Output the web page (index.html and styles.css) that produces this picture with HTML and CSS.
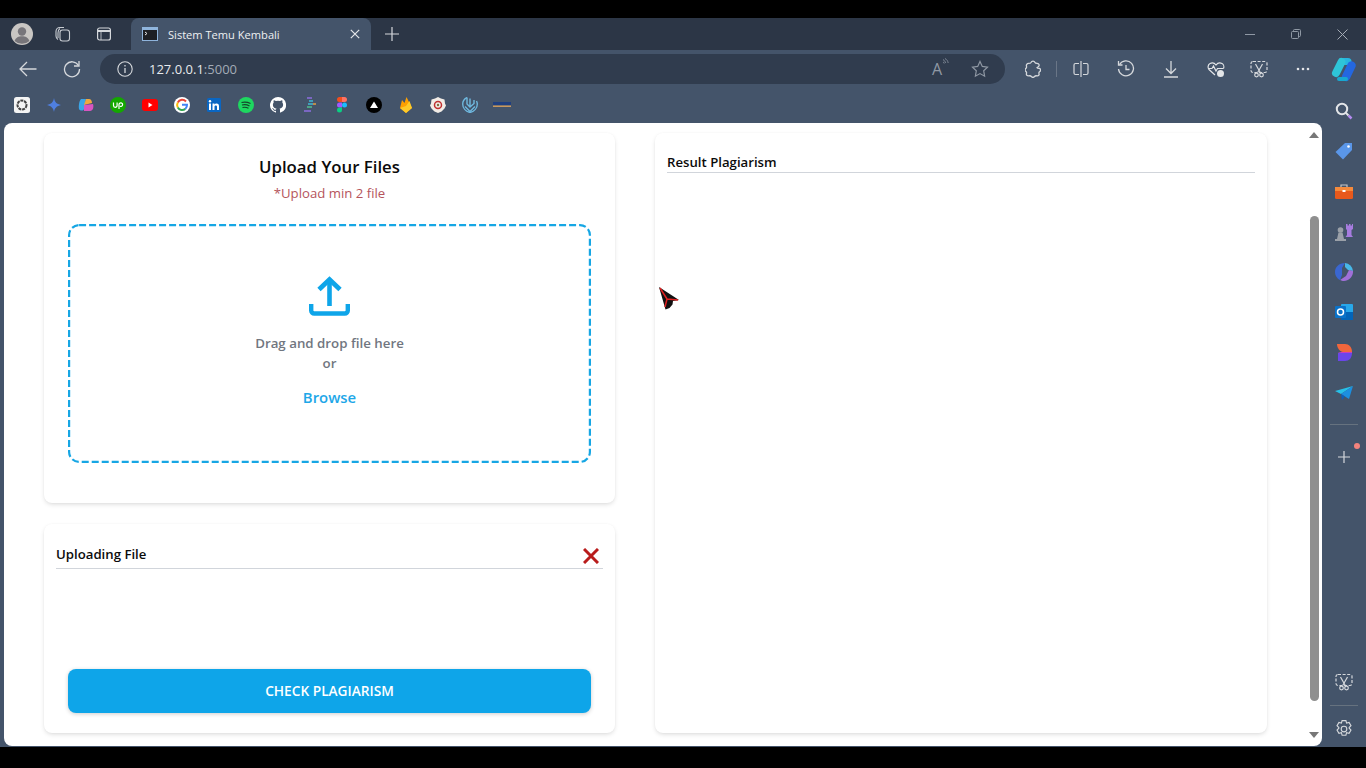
FILE: index.html
```html
<!DOCTYPE html>
<html>

<head>
	<meta charset="UTF-8">
	<title>Sistem Temu Kembali</title>
	<link rel="stylesheet" href="styles.css">
</head>

<body>
	<div class="browser">
		<!-- tab strip -->
		<div class="tabstrip">
			<span class="avatar">
				<svg width="22" height="22" viewBox="0 0 22 22"><circle cx="11" cy="11" r="11" fill="#c9c6c3"/><circle cx="11" cy="8.500" r="4.200" fill="#77757a"/><path d="M3.600 18c1.200-3.600 4-4.800 7.400-4.800s6.200 1.200 7.400 4.800a11 11 0 0 1-14.800 0z" fill="#77757a"/></svg>
			</span>
			<span class="strip-icon strip-icon-first">
				<svg width="18" height="18" viewBox="0 0 18 18" fill="none" stroke="#c8ccd2" stroke-width="1.100"><rect x="7" y="5" width="9.500" height="11" rx="2.500"/><path d="M5 14.500c-1.500-1-2-2-2-3.500V6.500C3 4 4.500 2.500 7 2.500h4"/><path d="M7 3.500C5.500 4.500 5 6 5 8v5"/></svg>
			</span>
			<span class="strip-icon">
				<svg width="16" height="16" viewBox="0 0 16 16" fill="none" stroke="#d5d8dc" stroke-width="1.200"><rect x="1.600" y="2" width="12.800" height="12" rx="2"/><path d="M1.600 5h12.800" stroke-width="2"/><path d="M5 5.200V14" stroke-width=".8"/></svg>
			</span>
			<div class="tab">
				<svg class="tab-favicon" width="16" height="14" viewBox="0 0 16 14"><rect width="16" height="14" fill="#8fb4dc"/><rect x="1" y="3" width="14" height="10" fill="#1d1f24"/><path d="M3 5l2 1.500L3 8" fill="none" stroke="#e5e5e5"/></svg>
				<span class="tab-title">Sistem Temu Kembali</span>
				<svg class="tab-close" width="10" height="10" viewBox="0 0 10 10" stroke="#e6e8eb" stroke-width="1.200"><path d="M.8.800l8.400 8.400M9.200.800L.8 9.200"/></svg>
			</div>
			<svg class="new-tab" width="14" height="14" viewBox="0 0 14 14" stroke="#d5d8dc" stroke-width="1.200"><path d="M7 0v14M0 7h14"/></svg>
			<div class="window-btns">
				<svg width="10" height="10" viewBox="0 0 10 10" stroke="#8f98a4"><path d="M0 5.500h10"/></svg>
				<svg width="10" height="10" viewBox="0 0 10 10" fill="none" stroke="#8f98a4"><rect x=".5" y="2.500" width="7" height="7" rx="1"/><path d="M2.500 2V1.500a1 1 0 0 1 1-1h5a1 1 0 0 1 1 1v5a1 1 0 0 1-1 1H8"/></svg>
				<svg width="11" height="11" viewBox="0 0 11 11" stroke="#a5acb6"><path d="M.5.500l10 10M10.500.500l-10 10"/></svg>
			</div>
		</div>

		<!-- address bar row -->
		<div class="toolbar">
			<svg class="nav-back" width="18" height="16" viewBox="0 0 18 16" fill="none" stroke="#d5d8dc" stroke-width="1.300"><path d="M17.500 8H1M8 1L1 8l7 7"/></svg>
			<svg class="nav-reload" width="18" height="18" viewBox="0 0 18 18" fill="none" stroke="#d5d8dc" stroke-width="1.300"><path d="M15.500 5.500A7.500 7.500 0 1 0 16.500 9"/><path d="M16 1v5h-5"/></svg>
			<div class="address">
				<svg class="info-icon" width="16" height="16" viewBox="0 0 16 16" fill="none" stroke="#d5d8dc" stroke-width="1.100"><circle cx="8" cy="8" r="7.200"/><path d="M8 7v5M8 4v1.500" stroke-width="1.300"/></svg>
				<span class="url">127.0.0.1<span class="url-port">:5000</span></span>
				<div class="address-end">
					<span class="read-aloud">A<svg width="7" height="9" viewBox="0 0 7 9" fill="none" stroke="#8f98a4" stroke-width=".8"><path d="M1 1.500c1.500 1 2.300 2 2.500 3.500M1 4c.7.300 1 .7 1.200 1.500M3 .5c1.800 1 2.800 2.500 3.200 4.500"/></svg></span>
					<svg width="18" height="18" viewBox="0 0 18 18" fill="none" stroke="#8f98a4" stroke-width="1.200"><path d="M9 1.500l2.300 4.900 5.200.7-3.800 3.700.9 5.400L9 13.600l-4.600 2.600.9-5.400L1.500 7.100l5.200-.7z"/></svg>
				</div>
			</div>
			<div class="tool-icons">
				<svg class="tool-ext" width="16" height="18" viewBox="0 0 16 18" fill="none" stroke="#d5d8dc" stroke-width="1.300"><path d="M6 2.500a2.200 2.200 0 0 1 4 0c.3.800 1 .9 2 .9 1.500 0 2.500 1 2 2.500-.3 1-1.500 1-2 1.800.5.800 1.700.6 2.800.8a1.800 1.800 0 0 1 0 3c-.8.500-1.100 1-.8 2 .5 1.500-.5 2.500-2 2.300-1.300-.2-2 0-2.800 1-.7.800-1.800.800-2.500 0-.8-1-1.500-1.200-2.800-1C2 15.900 1 15 1.500 13.400c.3-1 0-1.500-.6-2a1.800 1.800 0 0 1 0-3c.6-.500.900-1 .6-2C1 5 2 3.400 3.500 3.400c1 0 2 0 2.500-.9z"/></svg>
				<span class="tool-sep"></span>
				<svg class="tool-split" width="16" height="16" viewBox="0 0 16 16" fill="none" stroke="#d5d8dc" stroke-width="1.200"><path d="M6 2.500H2.500a1.500 1.500 0 0 0-1.500 1.500v8a1.500 1.500 0 0 0 1.500 1.500H6M10 2.500h3.500A1.500 1.500 0 0 1 15 4v8a1.500 1.500 0 0 1-1.500 1.500H10M8 0v16"/></svg>
				<svg class="tool-history" width="18" height="18" viewBox="0 0 18 18" fill="none" stroke="#d5d8dc" stroke-width="1.300"><path d="M2.500 4.500A7.500 7.500 0 1 1 1.500 9"/><path d="M1.500 1v4h4M9 5v4.500h3.500"/></svg>
				<svg class="tool-download" width="14" height="17" viewBox="0 0 14 17" fill="none" stroke="#d5d8dc" stroke-width="1.300"><path d="M7 0v12M2 7.500L7 12.500l5-5M0 16h14"/></svg>
				<svg class="tool-health" width="18" height="18" viewBox="0 0 18 18" fill="none" stroke="#e3e5e8" stroke-width="1.200"><path d="M8 15L2 9.500C.500 8 .800 4.500 3 3.500 5 2.500 7.500 3 9 5c1.500-2 4-2.500 6-1.500 1.800 1 2.200 3.500 1.500 5"/><path d="M1 8.500h4l1.500-2.500 2.500 5 1.500-2.500h6"/><circle cx="13.500" cy="13.500" r="3.500" fill="#e3e5e8" stroke="none"/></svg>
				<svg class="tool-cut" width="18" height="18" viewBox="0 0 18 18" fill="none" stroke="#d5d8dc" stroke-width="1.200"><rect x="1" y="1.500" width="16" height="11" rx="2" stroke-dasharray="3 1.600"/><path d="M5.500 4l4.800 8.500M12.500 4l-4.800 8.500"/><circle cx="6.500" cy="15" r="1.800"/><circle cx="11.500" cy="15" r="1.800"/></svg>
				<svg class="tool-more" width="14" height="4" viewBox="0 0 14 4" fill="#e3e5e8"><circle cx="2" cy="2" r="1.300"/><circle cx="7" cy="2" r="1.300"/><circle cx="12" cy="2" r="1.300"/></svg>
			</div>
			<svg class="copilot" width="26" height="25" viewBox="0 0 26 25" fill="none"><path d="M12 4.500h5" stroke="#27b5e0" stroke-width="7" stroke-linecap="round"/><path d="M10.500 5L5 16" stroke="#2ec5d8" stroke-width="8" stroke-linecap="round"/><path d="M20.500 8.500L15 20" stroke="#2467e0" stroke-width="8.500" stroke-linecap="round"/><path d="M8 22h7" stroke="#18a8d0" stroke-width="4" stroke-linecap="round"/></svg>
		</div>

		<!-- bookmarks bar -->
		<div class="bookmarks">
			<svg width="16" height="16" viewBox="0 0 16 16"><rect width="16" height="16" rx="2.500" fill="#f4f4f4"/><circle cx="8" cy="8" r="4.500" fill="none" stroke="#444" stroke-width="2" stroke-dasharray="3 .8"/></svg>
			<svg width="16" height="16" viewBox="0 0 16 16"><path d="M8 1c.8 4 2.500 6 7 7-4.500 1-6.200 3-7 7-.8-4-2.500-6-7-7 4.500-1 6.200-3 7-7z" fill="#4f7fe0"/></svg>
			<svg width="16" height="16" viewBox="0 0 16 16"><path d="M3 2h5L6 12c-.3 2-4 2-5 0-.5-3 0-8 2-10z" fill="#3ba5e8"/><path d="M8 2h3c2 0 3 2 3 4l-8 2z" fill="#f0a840"/><path d="M6 8l9-1c1 3 0 7-3 7H6z" fill="#d855c0"/></svg>
			<svg width="16" height="16" viewBox="0 0 16 16"><circle cx="8" cy="8" r="8" fill="#14a800"/><path d="M3.500 5.500v3a1.800 1.800 0 0 0 3.600 0v-3M9 12V7.500a1.800 1.800 0 1 1 1 1.700" fill="none" stroke="#fff" stroke-width="1.200"/></svg>
			<svg width="16" height="12" viewBox="0 0 16 12"><rect width="16" height="12" rx="3" fill="#f00"/><path d="M6.500 3.500v5l4-2.500z" fill="#fff"/></svg>
			<svg width="16" height="16" viewBox="0 0 16 16"><circle cx="8" cy="8" r="8" fill="#fff"/><path d="M12 4.500A5 5 0 0 0 3.800 5.500" fill="none" stroke="#ea4335" stroke-width="2"/><path d="M3.800 5.500a5 5 0 0 0 0 5" fill="none" stroke="#fbbc05" stroke-width="2"/><path d="M3.800 10.500a5 5 0 0 0 7.500 1.400" fill="none" stroke="#34a853" stroke-width="2"/><path d="M11.300 11.900A5 5 0 0 0 13 7.800H8" fill="none" stroke="#4285f4" stroke-width="2"/></svg>
			<svg width="14" height="14" viewBox="0 0 14 14"><rect width="14" height="14" rx="1.500" fill="#0a66c2"/><rect x="2" y="5.500" width="2" height="6.500" fill="#fff"/><circle cx="3" cy="3.200" r="1.200" fill="#fff"/><path d="M5.500 5.500h2v1c.8-1.500 4.500-1.800 4.500 1.500v4h-2V8.500c0-1.500-2.500-1.500-2.500 0V12h-2z" fill="#fff"/></svg>
			<svg width="16" height="16" viewBox="0 0 16 16"><circle cx="8" cy="8" r="8" fill="#1ed760"/><path d="M3.500 5.500c3-.8 6-.5 9 1M4 8c2.500-.6 5-.4 7.500 1M4.500 10.500c2-.5 4-.3 6 .8" fill="none" stroke="#14452a" stroke-width="1.200"/></svg>
			<svg width="16" height="16" viewBox="0 0 16 16"><path d="M8 0a8 8 0 0 0-2.500 15.600c.4.100.5-.2.500-.4v-1.400c-2.200.5-2.700-1-2.700-1-.4-.9-.9-1.200-.9-1.200-.7-.5.100-.5.100-.5.800.100 1.200.8 1.200.8.700 1.200 1.900.9 2.300.7.100-.5.300-.9.500-1.100-1.800-.2-3.600-.9-3.600-4 0-.9.300-1.600.8-2.100-.1-.2-.4-1 .1-2.100 0 0 .7-.2 2.200.8a7.600 7.600 0 0 1 4 0c1.500-1 2.200-.8 2.200-.8.400 1.100.2 1.900.1 2.100.5.600.8 1.300.8 2.100 0 3.100-1.900 3.800-3.600 4 .3.200.5.700.5 1.500v2.200c0 .2.100.5.600.4A8 8 0 0 0 8 0z" fill="#fff"/></svg>
			<svg width="14" height="16" viewBox="0 0 14 16" fill="none" stroke-width="1.500"><path d="M4 1h5" stroke="#8c6ee0"/><path d="M6 4h4" stroke="#3fb8d8"/><path d="M5 7h5" stroke="#3fb8d8"/><path d="M10 7h3" stroke="#e0a040"/><path d="M4 10h5" stroke="#50c090"/><path d="M1 14h7" stroke="#8c6ee0"/></svg>
			<svg width="10" height="16" viewBox="0 0 10 16"><path d="M0 2.500A2.500 2.500 0 0 1 2.500 0H5v5H2.500A2.500 2.500 0 0 1 0 2.500z" fill="#f24e1e"/><path d="M5 0h2.500a2.500 2.500 0 0 1 0 5H5z" fill="#ff7262"/><path d="M0 8a2.500 2.500 0 0 1 2.500-2.500H5v5H2.500A2.500 2.500 0 0 1 0 8z" fill="#a259ff"/><circle cx="7.500" cy="8" r="2.500" fill="#1abcfe"/><path d="M0 13a2.500 2.500 0 0 1 2.500-2.500H5V13a2.500 2.500 0 0 1-5 0z" fill="#0acf83"/></svg>
			<svg width="16" height="16" viewBox="0 0 16 16"><circle cx="8" cy="8" r="8" fill="#000"/><path d="M8 4.500l4 6.500H4z" fill="#fff"/></svg>
			<svg width="14" height="17" viewBox="0 0 14 17"><path d="M1 11L3 3l2.500 3L7.500 0 13 11l-6 5z" fill="#ffa000"/><path d="M1 11l6 5 6-5L10.500 4 7 9z" fill="#ffca28"/></svg>
			<svg width="16" height="16" viewBox="0 0 16 16"><path d="M8 0l3 1.500 3.500 1 .5 4 1 2-1.500 3-3 3L8 16l-3.500-1.500-3-3L0 8.500l1-2 .5-4L5 1.500z" fill="#f2ece6"/><circle cx="8" cy="8" r="3.500" fill="none" stroke="#c03030" stroke-width="1.500"/><circle cx="8" cy="8" r="1.200" fill="#807040"/></svg>
			<svg width="16" height="16" viewBox="0 0 16 16" fill="none" stroke="#6fb8de" stroke-width="1.400"><path d="M5 .5C2 2 .7 4.500.7 7c0 4 3 7.500 7.300 8.500 4.300-1 7.300-4.500 7.300-8.500 0-1-.3-2-.8-3"/><path d="M5 .5V7l3 3 4-3.500V3M8 1.500V10M3 9.500l5 5 5-5"/></svg>
			<svg width="18" height="6" viewBox="0 0 18 6"><rect width="18" height="3" fill="#1f3f80"/><rect y="3.500" width="18" height="1.500" fill="#c89860"/></svg>
		</div>

		<div class="workspace">
			<div class="viewport">
				<div class="page">
					<div class="left-col">
						<section class="card upload-card">
							<h1 class="upload-title">Upload Your Files</h1>
							<p class="upload-note">*Upload min 2 file</p>
							<div class="dropzone">
								<svg class="dash-frame" width="523" height="239" viewBox="0 0 523 239" fill="none"><rect x="1.100" y="1.100" width="520.800" height="236.800" rx="10" stroke="#16a6e4" stroke-width="2.200" stroke-dasharray="7 3"/></svg>
								<svg class="upload-icon" width="41" height="41" viewBox="0 0 41 41" fill="none" stroke="#0ea5e9"><path d="M20.500 30V3" stroke-width="4.600"/><path d="M10 13.500L20.500 3.500 31 13.500" stroke-width="4.800"/><path d="M2.200 28v6.500a3 3 0 0 0 3 3h30.600a3 3 0 0 0 3-3V28" stroke-width="4.400"/></svg>
								<p class="drop-text">Drag and drop file here</p>
								<p class="drop-text">or</p>
								<a class="browse" href="#">Browse</a>
							</div>
						</section>
						<section class="card uploading-card">
							<div class="card-head">
								<h2>Uploading File</h2>
								<svg class="clear-icon" width="16" height="16" viewBox="0 0 16 16" stroke="#b91c1c" stroke-width="3"><path d="M1 1l14 14M15 1L1 15"/></svg>
							</div>
							<div class="file-list"></div>
							<button class="check-btn">CHECK PLAGIARISM</button>
						</section>
					</div>
					<section class="card result-card">
						<div class="card-head">
							<h2>Result Plagiarism</h2>
						</div>
					</section>
				</div>
				<div class="scrollbar">
					<span class="arrow-up"></span>
					<div class="scroll-track"><div class="scroll-thumb"></div></div>
					<span class="arrow-down"></span>
				</div>
				<svg class="cursor" width="22" height="26" viewBox="0 0 22 26"><path d="M1 1l20 13-6 1-.5 3.500-3 3.500-4 1.500z" fill="#111"/><path d="M2 2l7 11 11 1M9 13l-2 8" fill="none" stroke="#e02020" stroke-width="1.500"/></svg>
			</div>

			<aside class="sidebar">
				<svg class="side-search" width="18" height="18" viewBox="0 0 18 18" fill="none"><circle cx="7" cy="7" r="5.200" stroke="#e3e5e8" stroke-width="2"/><path d="M11 11l2.500 2.500" stroke="#e3e5e8" stroke-width="2"/><path d="M13.500 13.500l3 3" stroke="#b48cf0" stroke-width="2.500"/></svg>
				<svg width="18" height="18" viewBox="0 0 18 18"><path d="M10 1h7v7l-9 9.500L.5 10z" fill="#5a96e8"/><circle cx="13.500" cy="4.500" r="1.300" fill="#fff"/></svg>
				<svg width="18" height="16" viewBox="0 0 18 16"><path d="M6 3V1h6v2" fill="none" stroke="#c5c5c5" stroke-width="1.200"/><rect y="3" width="18" height="12" rx="1.500" fill="#e8591c"/><rect y="3" width="18" height="4" fill="#f58a3c"/><rect x="7.500" y="6" width="3" height="2" fill="#fff"/></svg>
				<svg width="18" height="18" viewBox="0 0 18 18"><path d="M11 1h1.500v1.500H14V1h1.500v1.500H17V1h1v5l-1.500 1v5l1.500 2H10.500l1.500-2V7l-1-1z" fill="#a77cdf"/><circle cx="5.500" cy="7" r="2.800" fill="#9aa0a8"/><path d="M3.500 9.500h4L9 16H2z" fill="#9aa0a8"/><rect y="16" width="11" height="2" fill="#9aa0a8"/></svg>
				<svg width="18" height="18" viewBox="0 0 18 18"><path d="M10 0a9 9 0 0 1 8 8l-5-1-3-3z" fill="#48b8e8"/><path d="M18 8c.5 5-4 10-9 10-1.500 0-3-.5-4-1l6-4 3-6z" fill="#a070d8"/><path d="M5 17C1 15 0 11 0 9c0-5 4-9 10-9L7 5v7z" fill="#3a66d0"/></svg>
				<svg width="18" height="16" viewBox="0 0 18 16"><rect x="6" width="12" height="16" rx="1" fill="#28a8ea"/><rect x="6" y="8" width="12" height="8" fill="#0364b8"/><rect y="2" width="11" height="12" rx="1" fill="#0a72c9"/><circle cx="5.500" cy="8" r="3" fill="none" stroke="#fff" stroke-width="1.500"/></svg>
				<svg width="16" height="18" viewBox="0 0 16 18"><path d="M1 0h8c4 0 7 3 7 8H7C4 8 1 4 1 0z" fill="#f0663c"/><path d="M2 9h14c0 5-3 8-7 8H2z" fill="#6a46e8"/><path d="M7 8h9c0 .5 0 1 0 1H2c1-1 3-1 5-1z" fill="#c83cc0"/></svg>
				<svg width="18" height="14" viewBox="0 0 18 14"><path d="M0 5L18 0 6 8z" fill="#27c0e8"/><path d="M18 0L6 8l8 5z" fill="#1c8fe0"/><path d="M6 8l1 6 3-3.500z" fill="#0f5fb8"/></svg>
				<span class="side-sep"></span>
				<div class="side-add">
					<svg width="14" height="14" viewBox="0 0 14 14" stroke="#d5d8dc" stroke-width="1.200"><path d="M7 1v12M1 7h12"/></svg>
					<span class="side-dot"></span>
				</div>
				<div class="side-bottom">
					<svg width="18" height="18" viewBox="0 0 18 18" fill="none" stroke="#d5d8dc" stroke-width="1.200"><rect x="1" y="1.500" width="16" height="11" rx="2" stroke-dasharray="3 1.600"/><path d="M5.500 4l4.800 8.500M12.500 4l-4.800 8.500"/><circle cx="6.500" cy="15" r="1.800"/><circle cx="11.500" cy="15" r="1.800"/></svg>
					<span class="side-sep side-sep-bottom"></span>
					<svg width="18" height="18" viewBox="1.500 1 15 16" fill="none" stroke="#d5d8dc" stroke-width="1"><path d="M7.300 1.500h3.400l.6 2.200 2.200-.6 1.700 3-1.600 1.600v.6l1.600 1.600-1.700 3-2.200-.6-.6 2.200H7.300l-.6-2.200-2.200.6-1.700-3 1.600-1.600v-.6L2.800 6.100l1.700-3 2.200.6z"/><circle cx="9" cy="9" r="2.500"/></svg>
				</div>
			</aside>
		</div>
	</div>
</body>

</html>
```

FILE: styles.css
```css
* {
	box-sizing: border-box;
}

body {
	margin: 0;
	width: 1366px;
	height: 768px;
	overflow: hidden;
	background: #000;
	padding-top: 18px;
	font-family: "Open Sans", "Noto Sans", sans-serif;
}

.browser {
	height: 729px;
	background: #44546a;
	display: flex;
	flex-direction: column;
}

/* tab strip */
.tabstrip {
	height: 32px;
	background: #2c3646;
	display: flex;
	align-items: center;
	padding-left: 11px;
	flex-shrink: 0;
}

.avatar {
	display: flex;
	width: 22px;
	height: 22px;
}

.strip-icon {
	display: flex;
	margin-left: 25px;
}

.strip-icon-first {
	margin-left: 20px;
}

.tab {
	width: 240px;
	height: 32px;
	margin-left: 19px;
	background: #44546a;
	border-radius: 8px 8px 0 0;
	display: flex;
	align-items: center;
	padding: 0 11px;
}

.tab-favicon {
	flex-shrink: 0;
}

.tab-title {
	margin-left: 10px;
	font-size: 11.100px;
	color: #eef0f2;
	flex: 1;
}

.new-tab {
	margin-left: 14px;
}

.window-btns {
	margin-left: auto;
	display: flex;
	align-items: center;
	gap: 36px;
	padding-right: 18px;
}

/* toolbar */
.toolbar {
	height: 38px;
	display: flex;
	align-items: center;
	padding-left: 19px;
	flex-shrink: 0;
}

.nav-reload {
	margin-left: 26px;
}

.address {
	width: 905px;
	height: 30px;
	margin-left: 19px;
	border-radius: 15px;
	background: #303c4e;
	display: flex;
	align-items: center;
	padding: 0 16px 0 17px;
}

.url {
	margin-left: 16px;
	font-size: 13px;
	color: #e8eaed;
}

.url-port {
	color: #a3abb6;
}

.address-end {
	margin-left: auto;
	display: flex;
	align-items: center;
	gap: 22px;
}

.read-aloud {
	display: flex;
	font-size: 16px;
	color: #8f98a4;
}

.tool-icons {
	display: flex;
	align-items: center;
	margin-left: 20px;
}

.tool-sep {
	width: 1px;
	height: 16px;
	margin: 0 16px 0 15px;
	background: #6a7687;
}

.tool-history {
	margin-left: 28px;
}

.tool-download {
	margin-left: 29px;
}

.tool-health {
	margin-left: 29px;
}

.tool-cut {
	margin-left: 25px;
}

.tool-more {
	margin-left: 28px;
}

.copilot {
	margin-left: 21px;
}

/* bookmarks */
.bookmarks {
	height: 34px;
	display: grid;
	grid-auto-flow: column;
	grid-auto-columns: 32px;
	justify-content: start;
	justify-items: center;
	align-items: center;
	padding-left: 6px;
	flex-shrink: 0;
}

/* content */
.workspace {
	flex: 1;
	display: flex;
	min-height: 0;
	padding-left: 4px;
}

.viewport {
	width: 1318px;
	height: 623px;
	margin-top: 1px;
	background: #fff;
	border-radius: 8px;
	overflow: hidden;
	display: flex;
	position: relative;
}

.page {
	flex: 1;
	display: flex;
	gap: 40px;
	padding: 10px 0 13px 40px;
}

.left-col {
	width: 571px;
	display: flex;
	flex-direction: column;
	gap: 21px;
}

.card {
	background: #fff;
	border-radius: 8px;
	box-shadow: 0 2px 5px -1px rgba(0, 0, 0, 0.16), 0 0 2px rgba(0, 0, 0, 0.03);
}

.upload-card {
	height: 370px;
	padding: 22px 24px 0;
	text-align: center;
}

.upload-title {
	margin: 0;
	font-size: 16.800px;
	line-height: 23px;
	font-weight: 600;
	color: #0b0b0b;
}

.upload-note {
	margin: 5px 0 0;
	font-size: 13.200px;
	line-height: 20px;
	color: #b5545c;
}

.dropzone {
	height: 239px;
	margin-top: 21px;
	border-radius: 10px;
	padding-top: 52px;
	display: flex;
	flex-direction: column;
	align-items: center;
	position: relative;
}

.dash-frame {
	position: absolute;
	top: 0;
	left: 0;
}

.upload-icon {
	margin-bottom: 16px;
}

.drop-text {
	margin: 0;
	font-size: 13.300px;
	line-height: 20px;
	font-weight: 600;
	color: #71767f;
}

.browse {
	margin-top: 12px;
	font-size: 14.900px;
	line-height: 24px;
	font-weight: 600;
	color: #1ea7e8;
	text-decoration: none;
}

.uploading-card {
	flex: 1;
	padding: 20px 12px 20px;
	display: flex;
	flex-direction: column;
}

.card-head {
	height: 25px;
	border-bottom: 1px solid #d1d5db;
	display: flex;
	align-items: flex-start;
	justify-content: space-between;
}

.card-head h2 {
	margin: 0;
	font-size: 13.200px;
	line-height: 20px;
	font-weight: 600;
	color: #0b0b0b;
}

.clear-icon {
	margin: 4px 4px 0 0;
}

.file-list {
	flex: 1;
}

.check-btn {
	height: 44px;
	margin: 0 12px;
	padding: 0 0 2px;
	border: 0 none;
	border-radius: 8px;
	background: #0ea5e9;
	color: #fff;
	font-family: inherit;
	font-size: 13.700px;
	font-weight: 600;
	box-shadow: 0 1px 4px rgba(0, 0, 0, 0.2);
}

.result-card {
	width: 612px;
	padding: 19px 12px 0;
}

.result-card .card-head {
	height: 21px;
}

/* scrollbar */
.scrollbar {
	width: 16px;
	display: flex;
	flex-direction: column;
	align-items: center;
	padding: 9px 0 8px;
}

.arrow-up {
	border: 5px solid transparent;
	border-top: 0;
	border-bottom: 6px solid #777;
}

.arrow-down {
	border: 5px solid transparent;
	border-bottom: 0;
	border-top: 6px solid #777;
}

.scroll-track {
	flex: 1;
	width: 100%;
	display: flex;
	flex-direction: column;
	align-items: center;
	padding: 78px 0 31px;
}

.scroll-thumb {
	flex: 1;
	width: 9px;
	border-radius: 5px;
	background: #8f8f8f;
}

.cursor {
	position: absolute;
	left: 654px;
	top: 163px;
}

/* right sidebar */
.sidebar {
	width: 44px;
	display: flex;
	flex-direction: column;
	align-items: center;
	padding-bottom: 9px;
}

.sidebar > svg {
	display: block;
	height: 18px;
	margin-bottom: 22.300px;
}

.side-search {
	margin-top: -20px;
}

.side-sep {
	width: 28px;
	height: 1px;
	background: #66727f;
	flex-shrink: 0;
}

.side-add {
	margin-top: 25px;
	position: relative;
	display: flex;
}

.side-dot {
	position: absolute;
	top: -7px;
	right: -9px;
	width: 6px;
	height: 6px;
	border-radius: 50%;
	background: #f4837d;
}

.side-bottom {
	margin-top: auto;
	display: flex;
	flex-direction: column;
	align-items: center;
}

.side-sep-bottom {
	margin: 14px 0;
}
```
